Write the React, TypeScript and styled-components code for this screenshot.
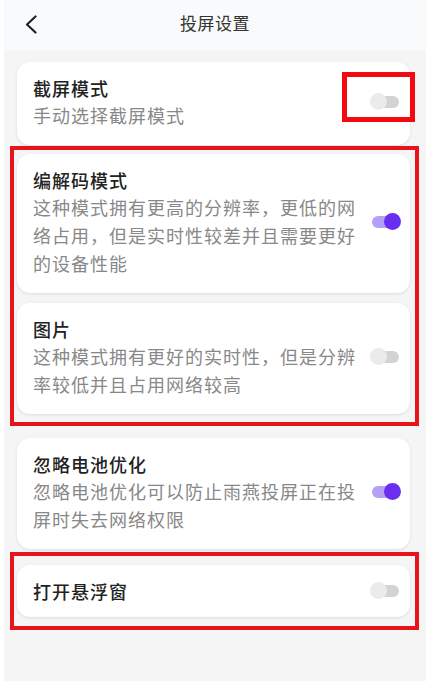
import React from "react";
import styled, { createGlobalStyle } from "styled-components";

const GlobalStyle = createGlobalStyle`
  html, body {
    margin: 0;
    padding: 0;
    background: #ffffff;
  }
  body {
    font-family: "Noto Sans CJK SC", "Noto Sans", sans-serif;
  }
`;

const PageDiv = styled.div`
  margin: 0 4px;
  min-height: 100vh;
  background: #f5f5f6;
  box-sizing: border-box;
`;

const HeaderBar = styled.div`
  position: relative;
  display: flex;
  align-items: center;
  justify-content: center;
  height: 50px;
  background: #f9fafb;
`;

const BackButton = styled.button`
  position: absolute;
  left: 16px;
  top: 13px;
  width: 22px;
  height: 22px;
  padding: 0;
  border: none;
  background: none;
  display: flex;
  align-items: center;
  justify-content: center;
`;

const Title = styled.div`
  font-size: 17px;
  font-weight: 400;
  color: #333333;
  letter-spacing: 0.5px;
  margin-top: -6px;
`;

const ListDiv = styled.div`
  display: flex;
  flex-direction: column;
  padding: 12px 16px 0 13px;
`;

const Card = styled.div<{ $mt?: number }>`
  position: relative;
  display: flex;
  align-items: center;
  margin-top: ${(p) => p.$mt ?? 0}px;
  padding: 13px 10px 16px 16px;
  background: #ffffff;
  border-radius: 13px;
  box-shadow: 0 1px 3px rgba(0, 0, 0, 0.1);
`;

const SingleCard = styled(Card)`
  padding-bottom: 13px;
`;

const TextCol = styled.div`
  width: 332px;
  flex: none;
`;

const ItemTitle = styled.div`
  font-size: 18px;
  line-height: 26px;
  font-weight: 500;
  color: #222222;
  letter-spacing: 1px;
`;

const ItemDesc = styled.div`
  font-size: 18px;
  line-height: 28px;
  color: #888888;
  letter-spacing: 1px;
`;

const Highlight = styled.div<{ $mt: number; $pt: number; $pb: number }>`
  display: flex;
  flex-direction: column;
  gap: 10px;
  margin: ${(p) => p.$mt}px -9px 0 -7px;
  padding: ${(p) => p.$pt}px 5px ${(p) => p.$pb}px 3px;
  border: 4px solid #e8141c;
`;

const ToggleMark = styled.div`
  position: absolute;
  right: -5px;
  top: 10px;
  width: 73px;
  height: 50px;
  box-sizing: border-box;
  border: 5px solid #f20a10;
`;

const ToggleWrap = styled.div`
  position: relative;
  width: 31px;
  height: 18px;
  margin-left: 5px;
  flex: none;
`;

const Track = styled.div<{ $on: boolean }>`
  position: absolute;
  left: 2px;
  right: 2px;
  top: 3px;
  height: 12px;
  border-radius: 6px;
  background: ${(p) => (p.$on ? "#b5a0f6" : "#d3d3d3")};
`;

const Thumb = styled.div<{ $on: boolean }>`
  position: absolute;
  top: 0;
  ${(p) => (p.$on ? "right: 0;" : "left: 0;")}
  width: 17px;
  height: 17px;
  border-radius: 50%;
  background: ${(p) => (p.$on ? "#6a2ef0" : "#ebebeb")};
`;

const Toggle = ({ on }: { on: boolean }) => (
  <ToggleWrap>
    <Track $on={on} />
    <Thumb $on={on} />
  </ToggleWrap>
);

const Item = ({
  title,
  desc,
  on,
  mt,
}: {
  title: string;
  desc: string;
  on: boolean;
  mt?: number;
}) => (
  <Card $mt={mt}>
    <TextCol>
      <ItemTitle>{title}</ItemTitle>
      <ItemDesc>{desc}</ItemDesc>
    </TextCol>
    <Toggle on={on} />
  </Card>
);

export default function App() {
  return (
    <>
      <GlobalStyle />
      <PageDiv>
        <HeaderBar>
          <BackButton>
            <svg width="12" height="19" viewBox="0 0 12 19" fill="none">
              <polyline
                points="10.5,1.5 2,9.5 10.5,17.5"
                stroke="#222"
                strokeWidth="2.2"
                strokeLinecap="round"
                strokeLinejoin="round"
              />
            </svg>
          </BackButton>
          <Title>投屏设置</Title>
        </HeaderBar>
        <ListDiv>
          <Card>
            <TextCol>
              <ItemTitle>截屏模式</ItemTitle>
              <ItemDesc>手动选择截屏模式</ItemDesc>
            </TextCol>
            <Toggle on={false} />
            <ToggleMark />
          </Card>
          <Highlight $mt={1} $pt={4} $pb={8}>
            <Item
              title="编解码模式"
              desc="这种模式拥有更高的分辨率，更低的网络占用，但是实时性较差并且需要更好的设备性能"
              on
            />
            <Item
              title="图片"
              desc="这种模式拥有更好的实时性，但是分辨率较低并且占用网络较高"
              on={false}
            />
          </Highlight>
          <Item
            title="忽略电池优化"
            desc="忽略电池优化可以防止雨燕投屏正在投屏时失去网络权限"
            on
            mt={12}
          />
          <Highlight $mt={3} $pt={9} $pb={9}>
            <SingleCard>
              <TextCol>
                <ItemTitle>打开悬浮窗</ItemTitle>
              </TextCol>
              <Toggle on={false} />
            </SingleCard>
          </Highlight>
        </ListDiv>
      </PageDiv>
    </>
  );
}
